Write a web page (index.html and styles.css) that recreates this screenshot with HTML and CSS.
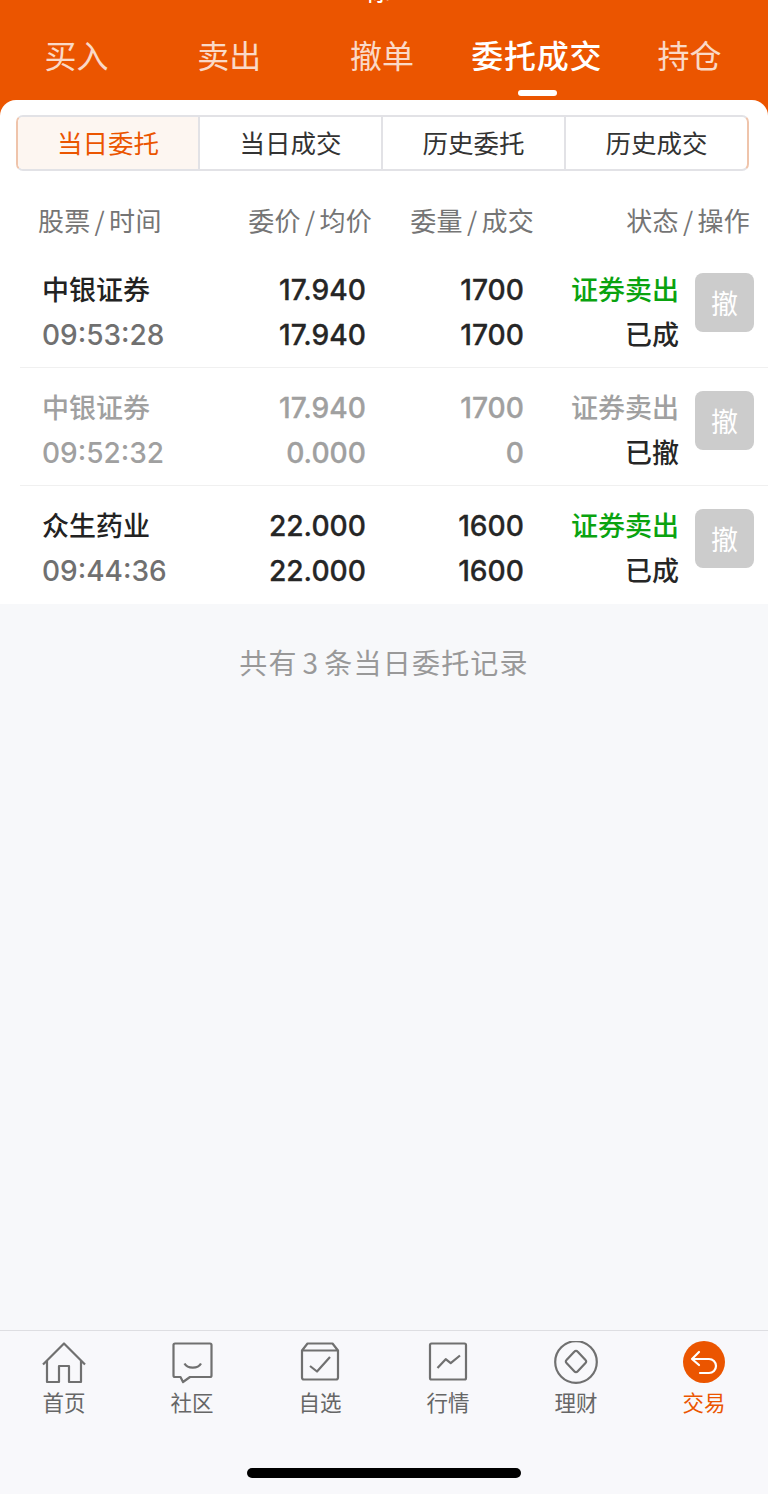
FILE: index.html
```html
<!DOCTYPE html>
<html lang="zh-CN">
<head>
  <meta charset="UTF-8">
  <title>委托成交</title>
  <link rel="stylesheet" href="styles.css">
</head>
<body>

  <header class="top">
    <div class="title"><span>标</span></div>
    <nav class="tabs">
      <a class="tab">买入</a>
      <a class="tab">卖出</a>
      <a class="tab">撤单</a>
      <a class="tab active">委托成交</a>
      <a class="tab">持仓</a>
    </nav>
  </header>

  <main class="content">
    <section class="panel">
      <div class="segment">
        <a class="seg on">当日委托</a>
        <a class="seg">当日成交</a>
        <a class="seg">历史委托</a>
        <a class="seg">历史成交</a>
      </div>

      <div class="thead">
        <span>股票<i class="sl">/</i>时间</span>
        <span class="r">委价<i class="sl">/</i>均价</span>
        <span class="r">委量<i class="sl">/</i>成交</span>
        <span class="r">状态<i class="sl">/</i>操作</span>
      </div>

      <div class="row">
        <div class="col"><b class="name">中银证券</b><span class="time">09:53:28</span></div>
        <div class="col r num"><span>17.940</span><span>17.940</span></div>
        <div class="col r num"><span>1700</span><span>1700</span></div>
        <div class="col r"><b class="green">证券卖出</b><b class="state">已成</b></div>
        <button class="cancel">撤</button>
      </div>

      <div class="row off">
        <div class="col"><b class="name">中银证券</b><span class="time">09:52:32</span></div>
        <div class="col r num"><span>17.940</span><span>0.000</span></div>
        <div class="col r num"><span>1700</span><span>0</span></div>
        <div class="col r"><b class="green">证券卖出</b><b class="state">已撤</b></div>
        <button class="cancel">撤</button>
      </div>

      <div class="row last">
        <div class="col"><b class="name">众生药业</b><span class="time">09:44:36</span></div>
        <div class="col r num"><span>22.000</span><span>22.000</span></div>
        <div class="col r num"><span>1600</span><span>1600</span></div>
        <div class="col r"><b class="green">证券卖出</b><b class="state">已成</b></div>
        <button class="cancel">撤</button>
      </div>
    </section>

    <p class="total">共有 3 条当日委托记录</p>
  </main>

  <footer class="bar">
    <div class="items">
      <a class="item">
        <svg class="ico" viewBox="0 0 44 44"><path d="M1 23.500 22 2.500l21 21M5 20v21h12V25h10v16h12V20"/></svg>
        首页
      </a>
      <a class="item">
        <svg class="ico" viewBox="0 0 44 44"><path d="M5 2.500h35a1.500 1.500 0 0 1 1.500 1.500v30.500a1.500 1.500 0 0 1-1.500 1.500H20l-7 5-2.500-5H5a1.500 1.500 0 0 1-1.500-1.500V4A1.500 1.500 0 0 1 5 2.500z"/><path d="M14.500 22.500c3 5.500 13.500 5.500 16.500 0"/></svg>
        社区
      </a>
      <a class="item">
        <svg class="ico" viewBox="0 0 44 44"><path d="M9.500 2.500h25l5.500 7v27a2 2 0 0 1-2 2H6a2 2 0 0 1-2-2v-27zM4 9.500h36"/><path d="M12 25l7 5.500L32 16"/></svg>
        自选
      </a>
      <a class="item">
        <svg class="ico" viewBox="0 0 44 44"><rect x="4" y="2.500" width="36" height="36" rx="1.500"/><path d="M11.500 27l8.200-8.800 5 4L34 14.500"/></svg>
        行情
      </a>
      <a class="item">
        <svg class="ico" viewBox="0 0 44 44"><circle cx="22" cy="21" r="20.800"/><path d="M20.500 10.500a2 2 0 0 1 3 0l8 8.500a2 2 0 0 1 0 3l-8 8.500a2 2 0 0 1-3 0l-8-8.500a2 2 0 0 1 0-3z"/></svg>
        理财
      </a>
      <a class="item now">
        <svg class="ico" viewBox="0 0 44 44"><circle class="disc" cx="22" cy="21" r="21"/><path class="back" d="M17 11l-7 7 7 6M10 18h17a7 7 0 0 1 0 14h-9"/></svg>
        交易
      </a>
    </div>
    <div class="home"></div>
  </footer>

</body>
</html>
```

FILE: styles.css
```css
body { margin: 0; min-height: 100vh; display: flex; flex-direction: column; background-color: #f7f8fa; font-family: "Noto Sans CJK SC", sans-serif; color: #333; }

.top { height: 116px; background-color: #eb5500; color: #fff; }
.title { height: 5px; overflow: hidden; display: flex; align-items: flex-end; justify-content: center; font-size: 26px; line-height: 30px; padding-right: 14px; }
.tabs { display: flex; padding-right: 2px; }
.tab { flex: 1; height: 91px; position: relative; text-align: center; font-size: 32px; line-height: 98px; opacity: 0.78; }
.tab.active { padding-left: 2px; opacity: 1; font-weight: 500; letter-spacing: 0.800px; }
.tab.active::after { content: ""; position: absolute; left: 50%; bottom: 0; width: 39px; height: 6px; margin-left: -18px; border-radius: 3px; background-color: #fff; }

.content { flex: 1; margin-top: -16px; }
.panel { height: 504px; padding-top: 15px; box-sizing: border-box; background-color: #fff; border-radius: 16px 16px 0 0; }

.segment { display: flex; height: 56px; margin: 0 19px 0 16px; box-sizing: border-box; border: 2px solid #e2e2e6; border-left-color: #efc4ab; border-right-color: #efc4ab; border-radius: 7px; overflow: hidden; }
.seg { flex: 1; text-align: center; font-size: 25.500px; line-height: 50px; border-left: 2px solid #e2e2e6; }
.seg:first-child { border-left: none; flex-grow: 0.995; }
.seg.on { background-color: #fdf6f1; color: #eb5500; }

.thead { display: grid; grid-template-columns: 194px 140px 162px 216px; height: 79px; padding: 30px 0 0 38px; box-sizing: border-box; font-size: 26px; line-height: 38px; letter-spacing: 0.300px; color: #757575; }
.sl { margin: 0 4px; font-style: normal; }
.r { text-align: right; }

.row { display: grid; grid-template-columns: 186px 138px 158px 155px 59px; align-items: start; height: 118px; box-sizing: border-box; margin-left: 20px; padding: 18px 0 0 22px; border-bottom: 1px solid #f0f0f0; }
.row.last { border-bottom: none; }
.col { display: flex; flex-direction: column; font-size: 27px; line-height: 45px; }
.col span, .col b { display: block; }
.name, .green, .state { margin: -2px 0 2px; font-weight: 500; }
.name { color: #222; }
.time { font-family: Inter, sans-serif; font-weight: 500; font-size: 28px; color: #707070; }
.num { font-family: Inter, sans-serif; font-weight: 500; font-size: 28.200px; -webkit-text-stroke: 0.300px; color: #262626; }
.green { color: #0aa30f; }
.state { color: #262626; }
.cancel { width: 59px; height: 59px; margin: 5px 0 0 16px; padding: 0; border: none; border-radius: 8px; background-color: #ccc; color: #fff; font-family: inherit; font-size: 27px; }

.off .name, .off .time, .off .num span, .off .green { color: #a0a0a0; }

.total { margin: 38px 0 0; text-align: center; font-size: 28px; line-height: 40px; letter-spacing: 1.200px; word-spacing: -2.500px; color: #999; }

.bar { height: 164px; box-sizing: border-box; border-top: 1px solid #dedee2; background-color: #f8f8fb; }
.items { display: flex; padding-top: 10px; }
.item { flex: 1; display: flex; flex-direction: column; align-items: center; font-size: 21.500px; line-height: 28px; color: #666; }
.item.now { color: #eb5500; }
.ico { width: 44px; height: 44px; margin-bottom: 3px; fill: none; stroke: #707070; stroke-width: 2.200; stroke-linejoin: round; }
.ico .disc { fill: #eb5500; stroke: none; }
.ico .back { stroke: #fff; stroke-linecap: round; }
.home { width: 274px; height: 10px; margin: 52px auto 0; border-radius: 5px; background-color: #000; }
```
